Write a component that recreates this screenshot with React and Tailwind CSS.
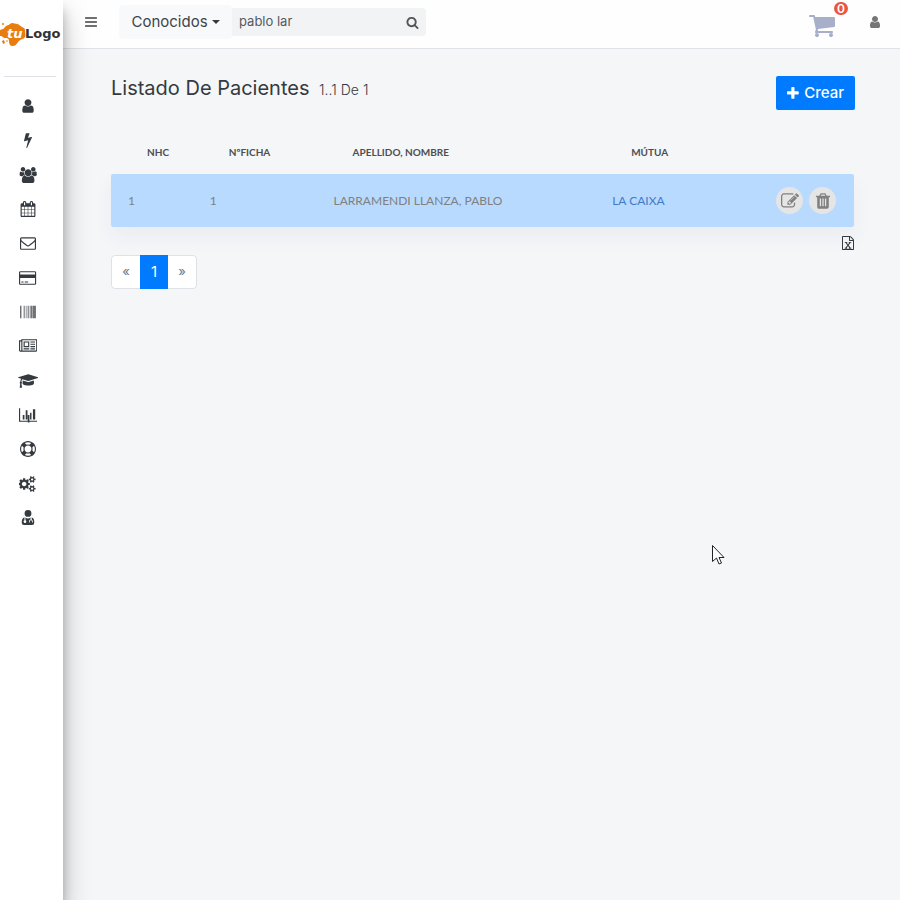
import React, { useState } from 'react'

const ICONS = {
    user: [1792, 'M1536 1399q0 109-62.5 187t-150.5 78h-854q-88 0-150.5-78t-62.5-187q0-85 8.5-160.5t31.5-152 58.5-131 94-89 134.5-34.5q131 128 313 128t313-128q76 0 134.5 34.5t94 89 58.5 131 31.5 152 8.5 160.5zm-256-887q0 159-112.5 271.5t-271.5 112.5-271.5-112.5-112.5-271.5 112.5-271.5 271.5-112.5 271.5 112.5 112.5 271.5z'],
    bolt: [1792, 'M1333 566q18 20 7 44l-540 1157q-13 25-42 25-4 0-14-2-17-5-25.5-19t-4.5-30l197-808-406 101q-4 1-12 1-18 0-31-11-18-15-13-39l201-825q4-14 16-23t28-9h328q19 0 32 12.5t13 29.5q0 8-5 18l-171 463 396-98q8-2 12-2 19 0 34 15z'],
    users: [2048, 'M657 896q-162 5-265 128h-134q-82 0-138-40.5t-56-118.5q0-353 124-353 6 0 43.5 21t97.5 42.5 119 21.5q67 0 133-23-5 37-5 66 0 159 93 290zm1071 637q0 120-73 189.5t-194 69.5h-874q-121 0-194-69.5t-73-189.5q0-53 3.5-103.5t14-109 26.5-108.5 43-97.5 62-81 85.5-53.5 111.5-20q10 0 43 21.5t73 48 107 48 135 21.5 135-21.5 107-48 73-48 43-21.5q61 0 111.5 20t85.5 53.5 62 81 43 97.5 26.5 108.5 14 109 3.5 103.5zm-1024-1277q0 106-75 181t-181 75-181-75-75-181 75-181 181-75 181 75 75 181zm704 384q0 159-112.5 271.5t-271.5 112.5-271.5-112.5-112.5-271.5 112.5-271.5 271.5-112.5 271.5 112.5 112.5 271.5zm576 225q0 78-56 118.5t-138 40.5h-134q-103-123-265-128 93-131 93-290 0-29-5-66 66 23 133 23 59 0 119-21.5t97.5-42.5 43.5-21q124 0 124 353zm-128-609q0 106-75 181t-181 75-181-75-75-181 75-181 181-75 181 75 75 181z'],
    calendar: [1792, 'M192 1664h288v-288h-288v288zm352 0h320v-288h-320v288zm-352-352h288v-320h-288v320zm352 0h320v-320h-320v320zm-352-384h288v-288h-288v288zm736 736h320v-288h-320v288zm-384-736h320v-288h-320v288zm768 736h288v-288h-288v288zm-384-352h320v-320h-320v320zm-352-864v-288q0-13-9.5-22.5t-22.5-9.5h-64q-13 0-22.5 9.5t-9.5 22.5v288q0 13 9.5 22.5t22.5 9.5h64q13 0 22.5-9.5t9.5-22.5zm736 864h288v-320h-288v320zm-384-384h320v-288h-320v288zm384 0h288v-288h-288v288zm32-480v-288q0-13-9.5-22.5t-22.5-9.5h-64q-13 0-22.5 9.5t-9.5 22.5v288q0 13 9.5 22.5t22.5 9.5h64q13 0 22.5-9.5t9.5-22.5zm384-64v1280q0 52-38 90t-90 38h-1408q-52 0-90-38t-38-90v-1280q0-52 38-90t90-38h128v-96q0-66 47-113t113-47h64q66 0 113 47t47 113v96h384v-96q0-66 47-113t113-47h64q66 0 113 47t47 113v96h128q52 0 90 38t38 90z'],
    envelope: [1792, 'M1664 1504v-768q-32 36-69 66-268 206-426 338-51 43-83 67t-86.5 48.5-102.5 24.5h-2q-48 0-102.5-24.5t-86.5-48.5-83-67q-158-132-426-338-37-30-69-66v768q0 13 9.5 22.5t22.5 9.5h1472q13 0 22.5-9.5t9.5-22.5zm0-1051v-24.5l-.5-13-3-12.5-5.5-9-9-7.5-14-2.5h-1472q-13 0-22.5 9.5t-9.5 22.5q0 168 147 284 193 152 401 317 6 5 35 29.5t46 37.5 44.5 31.5 50.5 27.5 43 9h2q20 0 43-9t50.5-27.5 44.5-31.5 46-37.5 35-29.5q208-165 401-317 54-43 100.5-115.5t46.5-131.5zm128-37v1088q0 66-47 113t-113 47h-1472q-66 0-113-47t-47-113v-1088q0-66 47-113t113-47h1472q66 0 113 47t47 113z'],
    card: [1920, 'M1760 128q66 0 113 47t47 113v1216q0 66-47 113t-113 47h-1600q-66 0-113-47t-47-113v-1216q0-66 47-113t113-47h1600zm-1600 128q-13 0-22.5 9.5t-9.5 22.5v224h1664v-224q0-13-9.5-22.5t-22.5-9.5h-1600zm1600 1280q13 0 22.5-9.5t9.5-22.5v-608h-1664v608q0 13 9.5 22.5t22.5 9.5h1600zm-1504-128v-128h256v128h-256zm384 0v-128h384v128h-384z'],
    barcode: [1792, 'M0 192h63v1408H0zM94 192h28v1408H94zM188 192h28v1408h-28zM345 192h28v1408h-28zM502 192h61v1408h-61zM659 192h28v1408h-28zM721 192h28v1408h-28zM784 192h28v1408h-28zM940 192h62v1408h-62zM1096 192h63v1408h-63zM1221 192h63v1408h-63zM1317 192h62v1408h-62zM1441 192h63v1408h-63zM1535 192h93v1408h-93zM1660 192h31v1408h-31zM1728 192h64v1408h-64z'],
    news: [2048, 'M1024 512h-384v384h384v-384zm128 640v128h-640v-128h640zm0-768v640h-640v-640h640zm640 768v128h-512v-128h512zm0-256v128h-512v-128h512zm0-256v128h-512v-128h512zm0-256v128h-512v-128h512zm-1536 960v-960h-128v960q0 26 19 45t45 19 45-19 19-45zm1664 0v-1088h-1536v1088q0 33-11 64h1483q26 0 45-19t19-45zm128-1216v1216q0 80-56 136t-136 56h-1664q-80 0-136-56t-56-136v-1088h256v-128h1792z'],
    school: [2304, 'M1774 836l18 316q4 69-82 128t-235 93.5-323 34.5-323-34.5-235-93.5-82-128l18-316 574 181q22 7 48 7t48-7zm530-324q0 23-22 31l-1120 352q-4 1-10 1t-10-1l-652-206q-43 34-71 111.5t-34 178.5q63 36 63 109 0 69-58 107l58 433q2 14-8 25-9 11-24 11h-192q-15 0-24-11-10-11-8-25l58-433q-58-38-58-107 0-73 65-111 11-207 98-330l-333-104q-22-8-22-31t22-31l1120-352q4-1 10-1t10 1l1120 352q22 8 22 31z'],
    chart: [2048, 'M2048 1536v128h-2048v-1536h128v1408zM420 900h190v508h-190zM750 350h200v1058h-200zM980 900h190v850h-190zM1240 650h160v758h-160zM1560 250h256v1158h-256z'],
    ring: [1792, 'M896 0q182 0 348 71t286 191 191 286 71 348-71 348-191 286-286 191-348 71-348-71-286-191-191-286-71-348 71-348 191-286 286-191 348-71zm0 128q-190 0-361 90l194 194q82-28 167-28t167 28l194-194q-171-90-361-90zm-678 1129l194-194q-28-82-28-167t28-167l-194-194q-90 171-90 361t90 361zm678 407q190 0 361-90l-194-194q-82 28-167 28t-167-28l-194 194q171 90 361 90zm0-384q159 0 271.5-112.5t112.5-271.5-112.5-271.5-271.5-112.5-271.5 112.5-112.5 271.5 112.5 271.5 271.5 112.5zm484-217l194 194q90-171 90-361t-90-361l-194 194q28 82 28 167t-28 167z'],
    cogs: [1920, 'M832 896q0-106-75-181t-181-75-181 75-75 181 75 181 181 75 181-75 75-181zm768 512q0-52-38-90t-90-38-90 38-38 90q0 53 37.5 90.5t90.5 37.5 90.5-37.5 37.5-90.5zm0-1024q0-52-38-90t-90-38-90 38-38 90q0 53 37.5 90.5t90.5 37.5 90.5-37.5 37.5-90.5zm-384 421v185q0 10-7 19.5t-16 10.5l-155 24q-11 35-32 76 34 48 90 115 7 11 7 20 0 12-7 19-23 30-82.5 89.5t-78.5 59.5q-11 0-21-7l-115-90q-37 19-77 31-11 108-23 155-7 24-30 24h-186q-11 0-20-7.5t-10-17.5l-23-153q-34-10-75-31l-118 89q-7 7-20 7-11 0-21-8-144-133-144-160 0-9 7-19 10-14 41-53t47-61q-23-44-35-82l-152-24q-10-1-17-9.5t-7-19.5v-185q0-10 7-19.5t16-10.5l155-24q11-35 32-76-34-48-90-115-7-11-7-20 0-12 7-20 22-30 82-89t79-59q11 0 21 7l115 90q34-18 77-32 11-108 23-154 7-24 30-24h186q11 0 20 7.5t10 17.5l23 153q34 10 75 31l118-89q8-7 20-7 11 0 21 8 144 133 144 160 0 8-7 19-12 16-42 54t-45 60q23 48 34 82l152 23q10 2 17 10.5t7 19.5zm640 533v140q0 16-149 31-12 27-30 52 51 113 51 138 0 4-4 7-122 71-124 71-8 0-46-47t-52-68q-20 2-30 2t-30-2q-14 21-52 68t-46 47q-2 0-124-71-4-3-4-7 0-25 51-138-18-25-30-52-149-15-149-31v-140q0-16 149-31 13-29 30-52-51-113-51-138 0-4 4-7 4-2 35-20t59-34 30-16q8 0 46 46.5t52 67.5q20-2 30-2t30 2q51-71 92-112l6-2q4 0 124 70 4 3 4 7 0 25-51 138 17 23 30 52 149 15 149 31zm0-1024v140q0 16-149 31-12 27-30 52 51 113 51 138 0 4-4 7-122 71-124 71-8 0-46-47t-52-68q-20 2-30 2t-30-2q-14 21-52 68t-46 47q-2 0-124-71-4-3-4-7 0-25 51-138-18-25-30-52-149-15-149-31v-140q0-16 149-31 13-29 30-52-51-113-51-138 0-4 4-7 4-2 35-20t59-34 30-16q8 0 46 46.5t52 67.5q20-2 30-2t30 2q51-71 92-112l6-2q4 0 124 70 4 3 4 7 0 25-51 138 17 23 30 52 149 15 149 31z'],
    doctor: [1792, 'M1280 384a384 384 0 1 1-768 0a384 384 0 1 1 768 0zM500 830l0 330a150 150 0 1 0 110 0v-330q130 110 286 110t286-110v230q-170 30-170 200v110q0 40 45 40t45-40v-110q0-110 120-110t120 110v110q0 40 45 40t45-40v-110q0-160-120-200v-210q290 60 290 560q0 280-260 280h-892q-260 0-260-280q0-480 310-590z'],
    bars: [1792, 'M1664 1344v128q0 26-19 45t-45 19h-1408q-26 0-45-19t-19-45v-128q0-26 19-45t45-19h1408q26 0 45 19t19 45zm0-512v128q0 26-19 45t-45 19h-1408q-26 0-45-19t-19-45v-128q0-26 19-45t45-19h1408q26 0 45 19t19 45zm0-512v128q0 26-19 45t-45 19h-1408q-26 0-45-19t-19-45v-128q0-26 19-45t45-19h1408q26 0 45 19t19 45z'],
    search: [1792, 'M1216 832q0-185-131.5-316.5t-316.5-131.5-316.5 131.5-131.5 316.5 131.5 316.5 316.5 131.5 316.5-131.5 131.5-316.5zm512 832q0 52-38 90t-90 38q-54 0-90-38l-343-342q-179 124-399 124-143 0-273.5-55.5t-225-150-150-225-55.5-273.5 55.5-273.5 150-225 225-150 273.5-55.5 273.5 55.5 225 150 150 225 55.5 273.5q0 220-124 399l343 343q37 37 37 90z'],
    cart: [1792, 'M704 1536q0 52-38 90t-90 38-90-38-38-90 38-90 90-38 90 38 38 90zm896 0q0 52-38 90t-90 38-90-38-38-90 38-90 90-38 90 38 38 90zm128-1088v512q0 24-16.5 42.5t-40.5 21.5l-1044 122q13 60 13 70 0 16-24 64h920q26 0 45 19t19 45-19 45-45 19h-1024q-26 0-45-19t-19-45q0-11 8-31.5t16-36 21.5-40 15.5-29.5l-177-823h-204q-26 0-45-19t-19-45 19-45 45-19h256q16 0 28.5 6.5t19.5 15.5 13 24.5 8 26 5.5 29.5 4.5 26h1201q26 0 45 19t19 45z'],
    plus: [1408, 'M1408 736v192q0 40-28 68t-68 28h-416v416q0 40-28 68t-68 28h-192q-40 0-68-28t-28-68v-416h-416q-40 0-68-28t-28-68v-192q0-40 28-68t68-28h416v-416q0-40 28-68t68-28h192q40 0 68 28t28 68v416h416q40 0 68 28t28 68z'],
    edit: [1792, 'M888 1184l116-116-152-152-116 116v56h96v96h56zm440-720q-16-16-33 1l-350 350q-17 17-1 33t33-1l350-350q17-17 1-33zm80 594v190q0 119-84.5 203.5t-203.5 84.5h-832q-119 0-203.5-84.5t-84.5-203.5v-832q0-119 84.5-203.5t203.5-84.5h832q63 0 117 25 15 7 18 23 3 17-9 29l-49 49q-14 14-32 8-23-6-45-6h-832q-66 0-113 47t-47 113v832q0 66 47 113t113 47h832q66 0 113-47t47-113v-126q0-13 9-22l64-64q15-15 35-7t20 29zm-96-738l288 288-672 672h-288v-288zm444 132l-92 92-288-288 92-92q28-28 68-28t68 28l152 152q28 28 28 68t-28 68z'],
    trash: [1792, 'M704 1376v-704q0-14-9-23t-23-9h-64q-14 0-23 9t-9 23v704q0 14 9 23t23 9h64q14 0 23-9t9-23zm256 0v-704q0-14-9-23t-23-9h-64q-14 0-23 9t-9 23v704q0 14 9 23t23 9h64q14 0 23-9t9-23zm256 0v-704q0-14-9-23t-23-9h-64q-14 0-23 9t-9 23v704q0 14 9 23t23 9h64q14 0 23-9t9-23zm-544-992h448l-48-117q-7-9-17-11h-317q-10 2-17 11zm928 32v64q0 14-9 23t-23 9h-96v948q0 83-47 143.5t-113 60.5h-832q-66 0-113-58.5t-47-141.5v-952h-96q-14 0-23-9t-9-23v-64q0-14 9-23t23-9h309l70-167q15-37 54-63t79-26h320q40 0 79 26t54 63l70 167h309q14 0 23 9t9 23z'],
    excel: [1664, 'M1596 380q28 28 48 76t20 88v1152q0 40-28 68t-68 28h-1344q-40 0-68-28t-28-68v-1600q0-40 28-68t68-28h896q40 0 88 20t76 48zm-444-244v376h376q-10-29-22-41l-313-313q-12-12-41-22zm384 1528v-1024h-416q-40 0-68-28t-28-68v-416h-768v1536h1280zM480 768h330v110h-70l156 210 156-210h-70v-110h330v110h-90l-240 310 250 320h90v110h-340v-110h80l-166-220-166 220h80v110h-340v-110h90l250-320-240-310h-90z'],
}

function Icon({ name, className }) {
    const [width, d] = ICONS[name]
    return (
        <svg viewBox={`0 0 ${width} 1792`} fill="currentColor" className={className} aria-hidden="true">
            <path d={d} />
        </svg>
    )
}

const menu = [
    { icon: 'user', label: 'Pacientes' },
    { icon: 'bolt', label: 'Accesos' },
    { icon: 'users', label: 'Grupos' },
    { icon: 'calendar', label: 'Agenda' },
    { icon: 'envelope', label: 'Mensajes' },
    { icon: 'card', label: 'Pagos' },
    { icon: 'barcode', label: 'Productos' },
    { icon: 'news', label: 'Noticias' },
    { icon: 'school', label: 'Cursos' },
    { icon: 'chart', label: 'Informes' },
    { icon: 'ring', label: 'Ayuda' },
    { icon: 'cogs', label: 'Ajustes' },
    { icon: 'doctor', label: 'Doctores' },
]

const pacientes = [
    { nhc: 1, ficha: 1, nombre: 'LARRAMENDI LLANZA, PABLO', mutua: 'LA CAIXA' },
]

function Logo() {
    return (
        <svg viewBox="0 0 63 28" className="h-7 w-full" role="img" aria-label="tuLogo">
            <path
                d="M0 10c2-1 4-1 5-3s3-1 5-3 5 0 7 0 3 2 5 3 3 1 3 4 1 4 0 6-4 2-6 4-3 5-6 5-4-2-4-5-2-3-4-3-2-2-5-2z"
                fill="#e97c0e"
            />
            <path d="M2 21l2-1 1 3-2 1z" fill="#e97c0e" />
            <circle cx="7" cy="21" r="0.8" fill="#e97c0e" />
            <circle cx="3" cy="4" r="1" fill="#e97c0e" />
            <text x="7" y="18" fill="#fff" fontSize="13" fontStyle="italic" fontWeight="700" fontFamily="DejaVu Sans, sans-serif">tu</text>
            <text x="25" y="18" fill="#2f3236" fontSize="13" fontWeight="700" fontFamily="DejaVu Sans, sans-serif">Logo</text>
        </svg>
    )
}

function Sidebar() {
    return (
        <aside className="relative z-10 w-[63px] shrink-0 bg-white pt-5 shadow-[0_14px_28px_rgba(0,0,0,0.25),0_10px_10px_rgba(0,0,0,0.22)]">
            <Logo />
            <hr className="ml-1 mr-[7px] mt-7 border-[#dee2e6]" />
            <nav className="mt-3 flex h-[446px] w-14 flex-col text-[#343a40]">
                {menu.map(item => (
                    <a key={item.icon} href="#" aria-label={item.label} className="flex flex-1 items-center justify-center">
                        <Icon name={item.icon} className="h-4" />
                    </a>
                ))}
            </nav>
        </aside>
    )
}

function Header() {
    const [busqueda, setBusqueda] = useState('pablo lar')

    return (
        <header className="flex h-[49px] items-center border-b border-[#dee2e6] bg-[#fefefe] pb-1 pl-[21px] pr-[18px]">
            <button aria-label="Menú" className="text-[#707070]">
                <Icon name="bars" className="h-[14px]" />
            </button>
            <button aria-haspopup="menu" className="ml-[21px] flex h-[34px] w-[113px] items-center justify-center gap-1 rounded bg-[#f8f9fa] text-[15px] text-[#404448]">
                Conocidos
                <span className="border-x-4 border-t-4 border-x-transparent border-t-[#343a40]" />
            </button>
            <form className="flex h-7 w-[194px] items-center rounded-r bg-[#f2f3f5] px-[7px]" onSubmit={e => e.preventDefault()}>
                <input
                    aria-label="Buscar"
                    value={busqueda}
                    onChange={e => setBusqueda(e.target.value)}
                    className="min-w-0 flex-1 bg-transparent text-[13px] text-[#555a60] outline-none"
                />
                <button aria-label="Buscar" className="text-[#555]">
                    <Icon name="search" className="h-[13px]" />
                </button>
            </form>
            <button aria-label="Carrito" className="relative ml-auto text-[#a7afc9]">
                <Icon name="cart" className="mt-[6px] h-7" />
                <span className="absolute -right-3 -top-[3px] flex h-[13px] w-[14px] items-center justify-center rounded-full bg-[#ea5440] text-[12px] font-semibold text-white">
                    0
                </span>
            </button>
            <button aria-label="Cuenta" className="ml-8 text-[#757575]">
                <Icon name="user" className="h-[14px]" />
            </button>
        </header>
    )
}

function Tabla() {
    return (
        <table className="w-full table-fixed border-separate border-spacing-0 text-left font-[Lato,sans-serif]">
            <thead className="text-[10px] text-[#4d4f53]">
                <tr className="h-11">
                    <th className="w-[11%] pl-9 font-bold">NHC</th>
                    <th className="w-1/6 pl-9 font-bold">NºFICHA</th>
                    <th className="w-3/8 pl-9 font-bold">APELLIDO, NOMBRE</th>
                    <th className="pl-9 font-bold">MÚTUA</th>
                    <th className="w-24" aria-label="Acciones" />
                </tr>
            </thead>
            <tbody className="text-[12px] text-[#808080] shadow-[0_10px_20px_rgba(60,60,110,0.05)]">
                {pacientes.map(p => (
                    <tr key={p.nhc} className="h-[53px]">
                        <td className="rounded-l-xs bg-[#b8daff] pl-[17px]">{p.nhc}</td>
                        <td className="bg-[#b8daff] pl-[17px]">{p.ficha}</td>
                        <td className="bg-[#b8daff] pl-[17px]">{p.nombre}</td>
                        <td className="bg-[#b8daff] pl-[17px]">
                            <a href="#" className="text-[#4479c9]">{p.mutua}</a>
                        </td>
                        <td className="rounded-r-xs bg-[#b8daff] pr-[18px]">
                            <div className="flex justify-end gap-[6px]">
                                <button aria-label="Editar" className="flex size-[27px] items-center justify-center rounded-full bg-[#e5e5e5]">
                                    <Icon name="edit" className="h-[18px]" />
                                </button>
                                <button aria-label="Eliminar" className="flex size-[27px] items-center justify-center rounded-full bg-[#e5e5e5]">
                                    <Icon name="trash" className="h-[18px]" />
                                </button>
                            </div>
                        </td>
                    </tr>
                ))}
            </tbody>
        </table>
    )
}

export default function App() {
    return (
        <div className="relative flex min-h-screen bg-[#f4f6f8] font-[Inter,sans-serif]">
            <Sidebar />
            <div className="min-w-0 flex-1">
                <Header />
                <main className="pl-12 pr-[46px] pt-[27px]">
                    <div className="flex items-start justify-between">
                        <h1 className="text-[20px] leading-6 text-[#343a40]">
                            Listado De Pacientes <small className="ml-1 text-[14px] font-light">1..1 De 1</small>
                        </h1>
                        <button className="-mr-px flex h-[34px] items-center gap-[5px] rounded-xs bg-[#007bff] px-[11px] text-[15px] font-medium text-white">
                            <Icon name="plus" className="h-[15px]" />
                            Crear
                        </button>
                    </div>
                    <div className="mt-5">
                        <Tabla />
                    </div>
                    <div className="mt-[9px] flex justify-end">
                        <button aria-label="Exportar a Excel" className="text-[#343a40]">
                            <Icon name="excel" className="h-[14px]" />
                        </button>
                    </div>
                    <nav aria-label="Paginación" className="mt-[5px] flex h-[34px] w-[86px] items-stretch rounded border border-[#dee2e6] bg-white text-[13px] text-[#6c757d]">
                        <a href="#" aria-label="Anterior" className="flex flex-1 items-center justify-center">«</a>
                        <a href="#" aria-current="page" className="-my-px flex w-7 items-center justify-center bg-[#007bff] text-[15px] text-white">1</a>
                        <a href="#" aria-label="Siguiente" className="flex flex-1 items-center justify-center">»</a>
                    </nav>
                </main>
            </div>
            <svg viewBox="0 0 13 20" className="pointer-events-none absolute left-[712px] top-[545px] z-20 w-[13px]" aria-hidden="true">
                <path d="M.5.5v16l4-3.5 2.5 6 2.5-1-2.5-5.5h5z" fill="#fff" stroke="#222" />
            </svg>
        </div>
    )
}
